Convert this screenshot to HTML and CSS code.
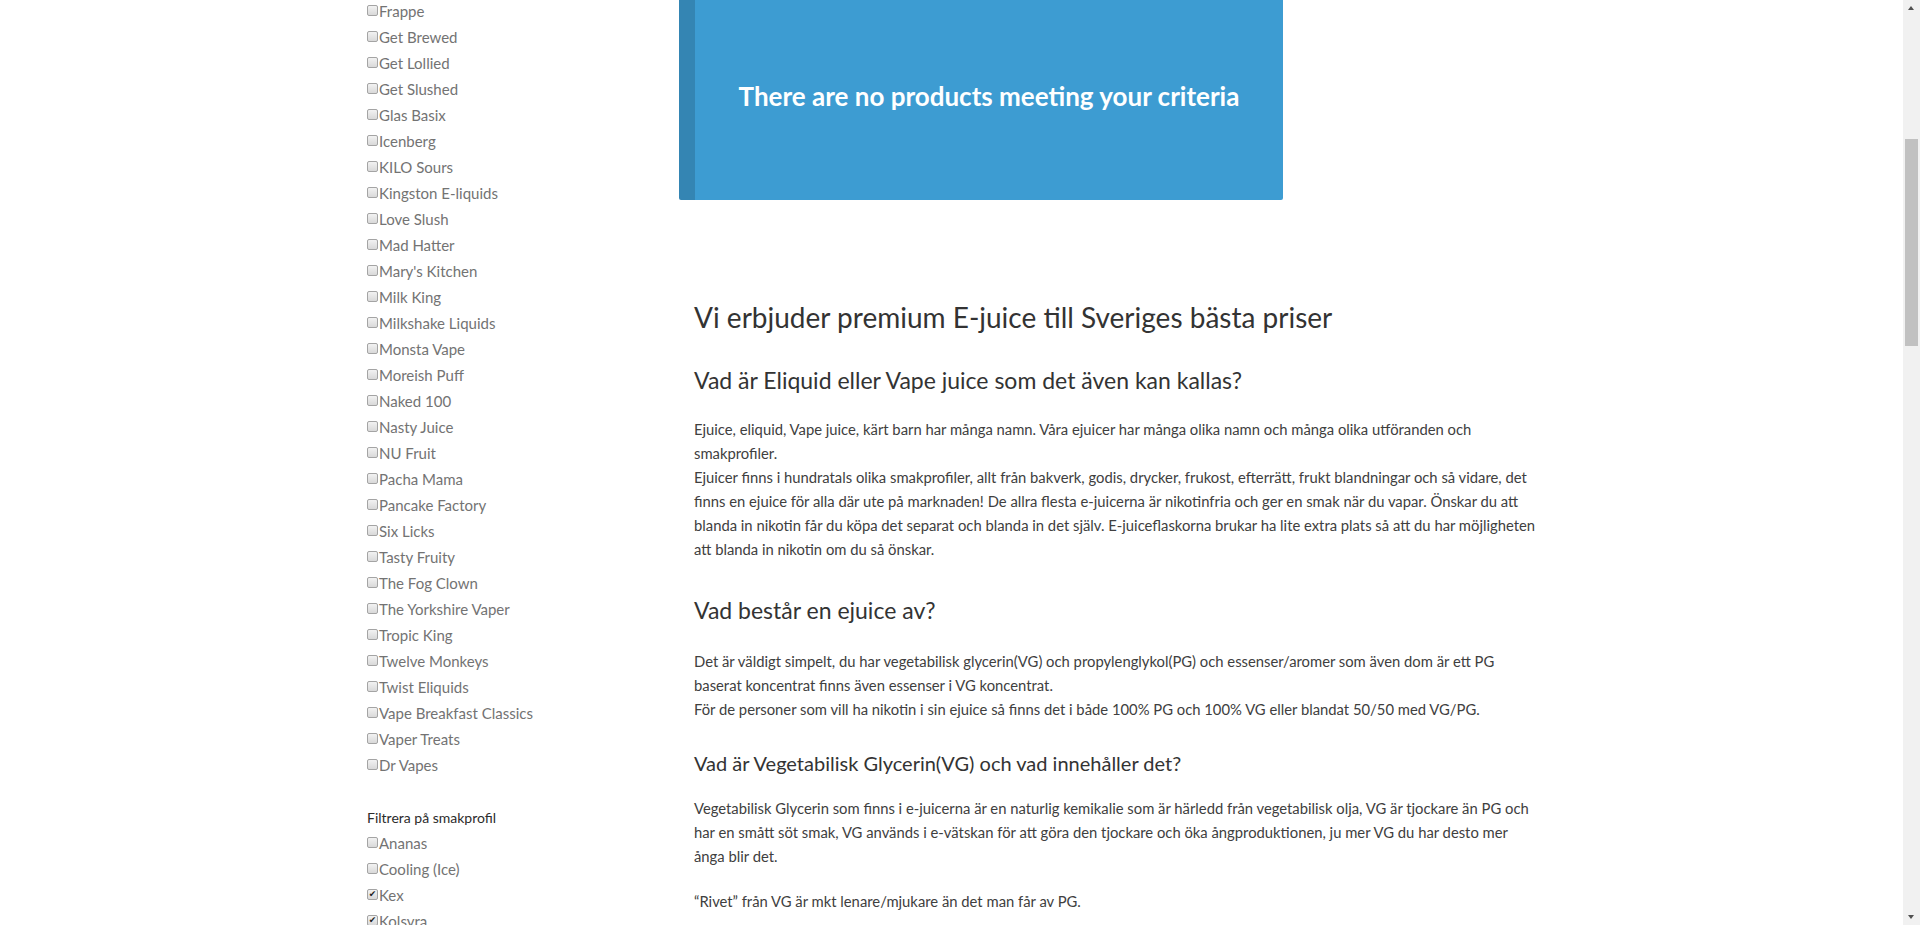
FILE: index.html
```html
<!DOCTYPE html>
<html lang="sv">
<head>
<meta charset="utf-8">
<title>E-juice</title>
<link rel="stylesheet" href="styles.css">
</head>
<body>
<div class="page">
  <div class="container">
    <aside class="sidebar">
      <ul class="filter-list">
        <li><label><input type="checkbox">Frappe</label></li>
        <li><label><input type="checkbox">Get Brewed</label></li>
        <li><label><input type="checkbox">Get Lollied</label></li>
        <li><label><input type="checkbox">Get Slushed</label></li>
        <li><label><input type="checkbox">Glas Basix</label></li>
        <li><label><input type="checkbox">Icenberg</label></li>
        <li><label><input type="checkbox">KILO Sours</label></li>
        <li><label><input type="checkbox">Kingston E-liquids</label></li>
        <li><label><input type="checkbox">Love Slush</label></li>
        <li><label><input type="checkbox">Mad Hatter</label></li>
        <li><label><input type="checkbox">Mary's Kitchen</label></li>
        <li><label><input type="checkbox">Milk King</label></li>
        <li><label><input type="checkbox">Milkshake Liquids</label></li>
        <li><label><input type="checkbox">Monsta Vape</label></li>
        <li><label><input type="checkbox">Moreish Puff</label></li>
        <li><label><input type="checkbox">Naked 100</label></li>
        <li><label><input type="checkbox">Nasty Juice</label></li>
        <li><label><input type="checkbox">NU Fruit</label></li>
        <li><label><input type="checkbox">Pacha Mama</label></li>
        <li><label><input type="checkbox">Pancake Factory</label></li>
        <li><label><input type="checkbox">Six Licks</label></li>
        <li><label><input type="checkbox">Tasty Fruity</label></li>
        <li><label><input type="checkbox">The Fog Clown</label></li>
        <li><label><input type="checkbox">The Yorkshire Vaper</label></li>
        <li><label><input type="checkbox">Tropic King</label></li>
        <li><label><input type="checkbox">Twelve Monkeys</label></li>
        <li><label><input type="checkbox">Twist Eliquids</label></li>
        <li><label><input type="checkbox">Vape Breakfast Classics</label></li>
        <li><label><input type="checkbox">Vaper Treats</label></li>
        <li><label><input type="checkbox">Dr Vapes</label></li>
      </ul>
      <h4 class="filter-title">Filtrera på smakprofil</h4>
      <ul class="filter-list">
        <li><label><input type="checkbox">Ananas</label></li>
        <li><label><input type="checkbox">Cooling (Ice)</label></li>
        <li><label><input type="checkbox" checked>Kex</label></li>
        <li><label><input type="checkbox" checked>Kolsyra</label></li>
      </ul>
    </aside>
    <main class="main">
      <div class="notice">There are no products meeting your criteria</div>
      <article class="seo">
        <h1 class="seo-title">Vi erbjuder premium E-juice till Sveriges bästa priser</h1>
        <h2 class="seo-h2 first">Vad är Eliquid eller Vape juice som det även kan kallas?</h2>
        <p>Ejuice, eliquid, Vape juice, kärt barn har många namn. Våra ejuicer har många olika namn och många olika utföranden och smakprofiler.<br>Ejuicer finns i hundratals olika smakprofiler, allt från bakverk, godis, drycker, frukost, efterrätt, frukt blandningar och så vidare, det finns en ejuice för alla där ute på marknaden! De allra flesta e-juicerna är nikotinfria och ger en smak när du vapar. Önskar du att blanda in nikotin får du köpa det separat och blanda in det själv. E-juiceflaskorna brukar ha lite extra plats så att du har möjligheten att blanda in nikotin om du så önskar.</p>
        <h2 class="seo-h2 second">Vad består en ejuice av?</h2>
        <p>Det är väldigt simpelt, du har vegetabilisk glycerin(VG) och propylenglykol(PG) och essenser/aromer som även dom är ett PG baserat koncentrat finns även essenser i VG koncentrat.<br>För de personer som vill ha nikotin i sin ejuice så finns det i både 100% PG och 100% VG eller blandat 50/50 med VG/PG.</p>
        <h3 class="seo-h3">Vad är Vegetabilisk Glycerin(VG) och vad innehåller det?</h3>
        <p>Vegetabilisk Glycerin som finns i e-juicerna är en naturlig kemikalie som är härledd från vegetabilisk olja, VG är tjockare än PG och har en smått söt smak, VG används i e-vätskan för att göra den tjockare och öka ångproduktionen, ju mer VG du har desto mer ånga blir det.</p>
        <p>“Rivet” från VG är mkt lenare/mjukare än det man får av PG.</p>
      </article>
    </main>
  </div>
</div>
<div class="scrollbar">
  <div class="sb-arrow up"></div>
  <div class="sb-track"><div class="sb-thumb"></div></div>
  <div class="sb-arrow down"></div>
</div>
</body>
</html>
```

FILE: styles.css
```css
html, body {
  margin: 0;
  padding: 0;
  height: 925px;
  overflow: hidden;
  background: #fff;
}

body {
  display: flex;
  font-family: Lato, "Liberation Sans", sans-serif;
  color: #404040;
}

.page {
  flex: 1;
  min-width: 0;
}

.container {
  width: 1200px;
  margin: -3px auto 0;
  box-sizing: border-box;
  padding-right: 15px;
  display: grid;
  grid-template-columns: 327.5px 1fr;
}

/* Sidebar */
.sidebar {
  padding-left: 15.5px;
}

.filter-list {
  list-style: none;
  margin: 0;
  padding: 0;
}

.filter-list li {
  height: 26px;
  line-height: 26px;
  font-size: 15px;
  color: #737373;
  white-space: nowrap;
}

.filter-list label {
  display: inline-flex;
  align-items: center;
}

.filter-list input {
  appearance: none;
  -webkit-appearance: none;
  width: 11px;
  height: 11px;
  margin: -1px 1px 0 0;
  border: 1px solid #a4a4a4;
  border-radius: 2px;
  background: linear-gradient(#f2f2f2, #d9d9d9);
  box-sizing: border-box;
  position: relative;
  flex: none;
}

.filter-list input:checked::after {
  content: "✔";
  position: absolute;
  left: 0;
  top: -1px;
  width: 9px;
  text-align: center;
  font-size: 9px;
  line-height: 11px;
  color: #222;
  font-family: "DejaVu Sans", sans-serif;
}

.filter-title {
  margin: 31px 0 0;
  font-size: 14px;
  font-weight: 400;
  line-height: 20px;
  color: #2b2b2b;
}

.filter-title + .filter-list {
  margin-top: 1px;
}

/* Main */
.main {
  min-width: 0;
}

.notice {
  width: 604px;
  height: 200px;
  box-sizing: border-box;
  padding: 81px 0 0;
  margin-top: 3px;
  background: #3d9cd2;
  border-left: 16px solid #3485b3;
  border-radius: 0 0 2px 2px;
  color: #fff;
  text-align: center;
  font-family: Lato, "Open Sans", sans-serif;
  font-weight: 700;
  font-size: 26px;
  line-height: 30px;
}

.seo {
  padding-left: 15px;
  color: #404040;
}

.seo-title {
  margin: 100px 0 32px;
  font-size: 28px;
  font-weight: 400;
  line-height: 34px;
  color: #333;
}

.seo-h2 {
  font-size: 23px;
  font-weight: 400;
  line-height: 28px;
  color: #333;
}

.seo-h2.first {
  margin: 0 0 23px;
}

.seo-h2.second {
  margin: 35px 0 25px;
}

.seo-h3 {
  margin: 30px 0 21px;
  font-size: 20px;
  font-weight: 400;
  line-height: 24px;
  color: #333;
}

.seo p {
  margin: 0 0 21px;
  font-size: 14.8px;
  line-height: 24px;
}

/* Fake browser scrollbar */
.scrollbar {
  width: 17px;
  flex: none;
  height: 925px;
  background: #f1f1f1;
  display: flex;
  flex-direction: column;
}

.sb-arrow {
  height: 17px;
  flex: none;
  position: relative;
}

.sb-arrow::after {
  content: "";
  position: absolute;
  left: 5px;
  width: 0;
  height: 0;
  border-left: 3.5px solid transparent;
  border-right: 3.5px solid transparent;
}

.sb-arrow.up::after {
  top: 6px;
  border-bottom: 4px solid #505050;
}

.sb-arrow.down::after {
  top: 7px;
  border-top: 4px solid #505050;
}

.sb-track {
  flex: 1;
  padding: 122px 2px 0;
}

.sb-thumb {
  height: 207px;
  background: #c1c1c1;
}
```
